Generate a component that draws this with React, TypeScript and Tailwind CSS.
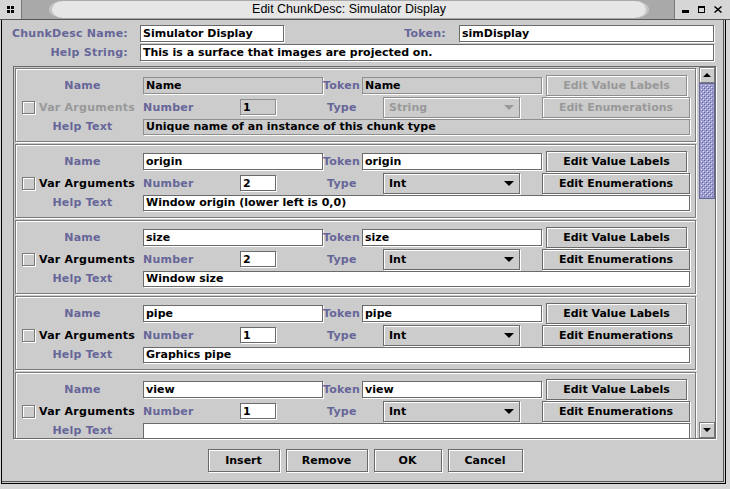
import type { ReactNode } from "react";

const ui = "font-['DejaVu_Sans',sans-serif] font-bold text-[11px] leading-none";
const label = "font-['DejaVu_Sans',sans-serif] font-bold text-[11px] leading-none tracking-[0.25px] text-[#666699] whitespace-nowrap";

function Field({ className, value, disabled }: { className: string; value: string; disabled?: boolean }) {
  return (
    <div
      className={`flex items-center overflow-hidden whitespace-nowrap border pl-[2px] text-black shadow-[1px_1px_0_#fff] ${ui} ${
        disabled ? "border-[#8e8e8e] bg-[#cccccc]" : "border-[#6a6a6a] bg-white"
      } ${className}`}
    >
      {value}
    </div>
  );
}

function Button({ className, children, disabled }: { className: string; children: ReactNode; disabled?: boolean }) {
  return (
    <div
      className={`flex shrink-0 items-center justify-center whitespace-nowrap border bg-[#cccccc] shadow-[inset_1px_1px_0_#fff,1px_1px_0_#fff] ${ui} ${
        disabled ? "border-[#8e8e8e] text-[#999999]" : "border-[#6a6a6a] text-black"
      } ${className}`}
    >
      {children}
    </div>
  );
}

function Combo({ value, disabled }: { value: string; disabled?: boolean }) {
  return (
    <div
      className={`flex h-[21px] w-[137px] shrink-0 items-center justify-between border bg-[#cccccc] pl-[5px] pr-[5px] shadow-[inset_1px_1px_0_#fff,1px_1px_0_#fff] ${ui} ${
        disabled ? "border-[#8e8e8e] text-[#999999]" : "border-[#6a6a6a] text-black"
      }`}
    >
      <span>{value}</span>
      <svg width="10" height="5" viewBox="0 0 10 5">
        <path d="M0 0H10L5 5Z" fill={disabled ? "#999999" : "#000"} />
      </svg>
    </div>
  );
}

function Checkbox() {
  return <div className="h-[13px] w-[13px] shrink-0 border border-[#7a7a7a] bg-[#cccccc] shadow-[inset_1px_1px_0_#fff,1px_1px_0_#fff]" />;
}

type ChunkProps = { name: string; token: string; number: string; type: string; help: string; disabled?: boolean };

function Chunk({ name, token, number, type, help, disabled }: ChunkProps) {
  return (
    <div className="h-[74px] w-[681px] shrink-0 border border-[#7a7a7a] pt-[6px] shadow-[inset_1px_1px_0_#fff,1px_1px_0_#fff]">
      <div className="flex h-[21px] items-center">
        <div className={`w-[127px] shrink-0 pl-[6px] text-center ${label}`}>Name</div>
        <Field className="h-[17px] w-[180px] shrink-0" value={name} disabled={disabled} />
        <div className={`w-[39px] shrink-0 ${label}`}>Token</div>
        <Field className="h-[17px] w-[180px] shrink-0" value={token} disabled={disabled} />
        <Button className="ml-[4px] h-[21px] w-[141px]" disabled={disabled}>
          Edit Value Labels
        </Button>
      </div>
      <div className="flex h-[22px] items-center">
        <div className="flex w-[127px] shrink-0 items-center pl-[6px]">
          <Checkbox />
          <span className={`ml-[4px] whitespace-nowrap tracking-[0.25px] ${ui} ${disabled ? "text-[#999999]" : "text-black"}`}>Var Arguments</span>
        </div>
        <div className={`w-[97px] shrink-0 ${label}`}>Number</div>
        <Field className="h-[16px] w-[36px] shrink-0" value={number} disabled={disabled} />
        <div className={`w-[107px] shrink-0 pl-[51px] ${label}`}>Type</div>
        <Combo value={type} disabled={disabled} />
        <Button className="ml-[22px] h-[21px] w-[148px]" disabled={disabled}>
          Edit Enumerations
        </Button>
      </div>
      <div className="flex h-[17px] items-center">
        <div className={`w-[127px] shrink-0 pl-[6px] text-center ${label}`}>Help Text</div>
        <Field className="h-[16px] w-[547px] shrink-0" value={help} disabled={disabled} />
      </div>
    </div>
  );
}

function ArrowButton({ up }: { up?: boolean }) {
  return (
    <div className="flex h-[16px] shrink-0 items-center justify-center border border-[#7a7a7a] bg-[#cccccc] shadow-[inset_1px_1px_0_#fff]">
      <svg width="8" height="4" viewBox="0 0 8 4">
        <path d={up ? "M0 4H8L4 0Z" : "M0 0H8L4 4Z"} fill="#000" />
      </svg>
    </div>
  );
}

function Thumb() {
  return (
    <svg width="16" height="116" className="block shrink-0">
      <defs>
        <pattern id="bumps" width="4" height="4" patternUnits="userSpaceOnUse">
          <rect x="0" y="0" width="1" height="1" fill="#e2e2ff" />
          <rect x="1" y="1" width="1" height="1" fill="#666699" />
          <rect x="2" y="2" width="1" height="1" fill="#e2e2ff" />
          <rect x="3" y="3" width="1" height="1" fill="#666699" />
        </pattern>
      </defs>
      <rect x="0.5" y="0.5" width="15" height="115" fill="#9c9cce" stroke="#666699" />
      <rect x="2" y="2" width="12" height="112" fill="url(#bumps)" />
    </svg>
  );
}

const chunks: ChunkProps[] = [
  { name: "Name", token: "Name", number: "1", type: "String", help: "Unique name of an instance of this chunk type", disabled: true },
  { name: "origin", token: "origin", number: "2", type: "Int", help: "Window origin (lower left is 0,0)" },
  { name: "size", token: "size", number: "2", type: "Int", help: "Window size" },
  { name: "pipe", token: "pipe", number: "1", type: "Int", help: "Graphics pipe" },
  { name: "view", token: "view", number: "1", type: "Int", help: "" },
];

export default function App() {
  return (
    <div className="flex h-[489px] w-[730px] flex-col overflow-hidden bg-[#d6d6d6]">
      {/* title bar */}
      <div className="flex h-[20px] shrink-0 border-b border-[#555]">
        <div className="flex w-[22px] items-center justify-center border-r border-[#7a7a7a]">
          <svg width="7" height="7" viewBox="0 0 7 7">
            <rect x="0" y="0" width="3" height="3" fill="#000" />
            <rect x="4" y="0" width="3" height="3" fill="#000" />
            <rect x="0" y="4" width="3" height="3" fill="#000" />
            <rect x="4" y="4" width="3" height="3" fill="#000" />
          </svg>
        </div>
        <div className="flex flex-1 items-stretch bg-[#a9a9a9] pb-[1px] pl-[27px] pr-[25px] pt-[1px]">
          <div className="flex flex-1 items-center justify-center rounded-[14px/50%] border-x-[3px] border-[#c4c4c4] bg-[#e6e6e6] font-['Liberation_Sans',sans-serif] text-[12.5px] text-black">
            Edit ChunkDesc: Simulator Display
          </div>
        </div>
        <div className="flex w-[56px] items-center justify-end gap-[9px] border-l border-[#7a7a7a] pr-[8px]">
          <svg width="7" height="7" viewBox="0 0 7 7">
            <rect x="0" y="4" width="7" height="3" fill="#000" />
          </svg>
          <svg width="7" height="7" viewBox="0 0 7 7">
            <rect x="0.5" y="0.5" width="6" height="6" fill="none" stroke="#000" />
            <rect x="0" y="0" width="7" height="2" fill="#000" />
          </svg>
          <svg width="8" height="7" viewBox="0 0 8 7">
            <path d="M1 0L4 2.5L7 0L8 1L5 3.5L8 6L7 7L4 4.5L1 7L0 6L3 3.5L0 1Z" fill="#000" />
          </svg>
        </div>
      </div>

      {/* window frame */}
      <div className="flex flex-1 pb-[5px] pl-[1px] pr-[4px]">
        <div className="flex flex-1 border-x border-b border-black bg-[#cccccc] pb-[1px] pr-[1px]">
          <div className="flex flex-1 flex-col bg-[#cccccc] pt-[5px] shadow-[inset_-1px_-1px_0_#555]">
            <div className="flex h-[17px] items-center">
              <div className={`w-[126px] shrink-0 text-right ${label}`}>ChunkDesc Name:</div>
              <Field className="ml-[12px] h-[17px] w-[144px] shrink-0" value="Simulator Display" />
              <div className={`w-[162px] shrink-0 text-right ${label}`}>Token:</div>
              <Field className="ml-[13px] h-[17px] w-[255px] shrink-0" value="simDisplay" />
            </div>
            <div className="mt-[2px] flex h-[17px] items-center">
              <div className={`w-[126px] shrink-0 text-right ${label}`}>Help String:</div>
              <Field className="ml-[12px] h-[17px] w-[574px] shrink-0" value="This is a surface that images are projected on." />
            </div>

            {/* scroll pane */}
            <div className="ml-[11px] mt-[5px] flex h-[373px] w-[703px] shrink-0 border border-[#6a6a6a] shadow-[1px_1px_0_#fff]">
              <div className="flex flex-1 flex-col gap-[2px] overflow-hidden pl-[1px] pt-[1px]">
                {chunks.map((c) => (
                  <Chunk key={c.name} {...c} />
                ))}
              </div>
              <div className="flex w-[16px] shrink-0 flex-col bg-[#cccccc]">
                <ArrowButton up />
                <Thumb />
                <div className="flex-1" />
                <ArrowButton />
              </div>
            </div>

            <div className="mt-[10px] flex justify-center gap-[6px] pl-[4px]">
              <Button className="h-[23px] w-[72px]">Insert</Button>
              <Button className="h-[23px] w-[82px]">Remove</Button>
              <Button className="h-[23px] w-[68px]">OK</Button>
              <Button className="h-[23px] w-[75px]">Cancel</Button>
            </div>
          </div>
        </div>
      </div>
    </div>
  );
}
